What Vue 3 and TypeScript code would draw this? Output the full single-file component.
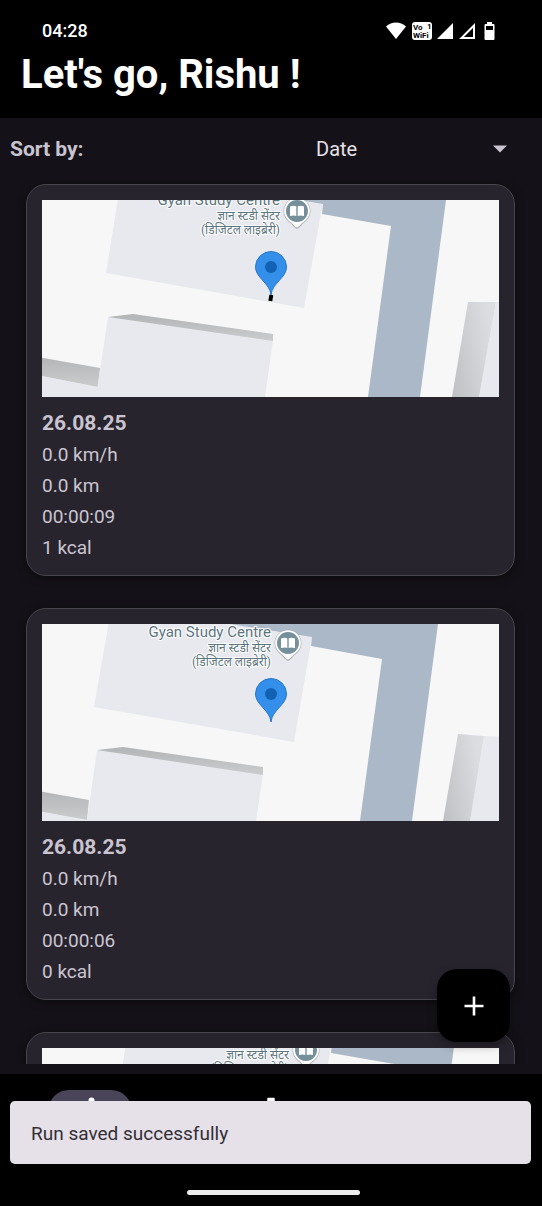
<script setup lang="ts">
import { ref } from 'vue'

interface Scene {
  shift: string
  building: string
  water: string
  lowerShadow: string
  lowerBuilding: string
  leftShadow: string
  leftBuilding: string
  rightShadow: string
  rightBuilding: string
  place: { x: number; y: number }
  labelX: number
  labelY: [number, number, number]
  pin: { x: number; y: number } | null
  trail: boolean
}

interface Run {
  id: number
  date: string
  speed: string
  distance: string
  duration: string
  calories: string
  scene: Scene
}

const sceneA: Scene = {
  shift: 'translate(0 0)',
  building: '79,-20 64,73 262,108 285,-20',
  water: '140,-20 281,4 280,14 349,26 326,197 378,197 404,0 407,-20',
  lowerShadow: '66,117 91,114 231,134 231,141',
  lowerBuilding: '66,117 72,117 231,140 223,197 54,197',
  leftShadow: '-10,156 58,168 56,187 -10,174',
  leftBuilding: '-10,174 56,187 230,210 -10,210',
  rightShadow: '426,102 454,102 437,197 410,197',
  rightBuilding: '454,102 480,102 480,197 437,197',
  place: { x: 255, y: 11 },
  labelX: 238,
  labelY: [5, 20, 34],
  pin: { x: 229, y: 67 },
  trail: true,
}

const sceneB: Scene = {
  shift: 'translate(0 0)',
  building: '70,-20 52,83 252,118 270,13 188,-20',
  water: '188,0 270,13 269,22 340,35 318,197 370,197 396,0',
  lowerShadow: '55,126 81,123 221,143 221,151',
  lowerBuilding: '55,126 62,126 221,150 214,197 45,197',
  leftShadow: '-10,166 47,176 45,196 -10,186',
  leftBuilding: '-10,186 45,196 45,210 -10,210',
  rightShadow: '416,110 442,112 428,197 401,197',
  rightBuilding: '442,112 480,113 480,197 428,197',
  place: { x: 246, y: 19 },
  labelX: 229,
  labelY: [13, 28, 42],
  pin: { x: 229, y: 70 },
  trail: false,
}

const sceneC: Scene = { ...sceneA, shift: 'translate(9 -9)' }

const runs: Run[] = [
  { id: 1, date: '26.08.25', speed: '0.0 km/h', distance: '0.0 km', duration: '00:00:09', calories: '1 kcal', scene: sceneA },
  { id: 2, date: '26.08.25', speed: '0.0 km/h', distance: '0.0 km', duration: '00:00:06', calories: '0 kcal', scene: sceneB },
  { id: 3, date: '26.08.25', speed: '0.0 km/h', distance: '0.0 km', duration: '00:00:05', calories: '0 kcal', scene: sceneC },
]

const sortBy = ref('Date')
const sortOptions = ['Date', 'Distance', 'Speed']
</script>

<template>
  <div class="app">
    <header class="header">
      <div class="status">
        <span class="clock">04:28</span>
        <svg class="status-icons" width="110" height="20" viewBox="0 0 110 20" aria-hidden="true">
          <path d="M0 5.6C5.5.1 14.5.1 20 5.6L10 18Z" fill="#fff" />
          <rect x="26" y="1" width="20" height="18" rx="3" fill="#fff" />
          <text x="27" y="9" class="badge">Vo</text>
          <text x="41" y="8" class="badge">1</text>
          <text x="27" y="17" class="badge">WiFi</text>
          <path d="M67 2V18H51Z" fill="#fff" />
          <path d="M88 4.500V17H75.500Z" fill="none" stroke="#fff" stroke-width="2" />
          <path d="M101 1h5v2h1.500q1 0 1 1V18q0 1-1 1h-8q-1 0-1-1V4q0-1 1-1H101Z" fill="#fff" />
          <rect x="100" y="5" width="7" height="4" fill="#000" />
        </svg>
      </div>
      <h1>Let's go, Rishu !</h1>
    </header>

    <main class="content">
      <div class="sort">
        <label for="sort">Sort by:</label>
        <div class="picker">
          <select id="sort" v-model="sortBy">
            <option v-for="o in sortOptions" :key="o">{{ o }}</option>
          </select>
          <svg class="caret" width="14" height="8" viewBox="0 0 14 8" aria-hidden="true">
            <path d="M0 .5H14L7 7.500Z" fill="#cac4d0" />
          </svg>
        </div>
      </div>

      <div class="list">
        <article v-for="run in runs" :key="run.id" class="card">
          <svg class="map" viewBox="0 0 457 197" preserveAspectRatio="xMidYMid slice">
            <defs>
              <linearGradient :id="`down${run.id}`" x1="0" y1="0" x2="0" y2="1">
                <stop offset="0" stop-color="#b3b4b6" />
                <stop offset="1" stop-color="#cbccce" />
              </linearGradient>
              <linearGradient :id="`side${run.id}`" x1="0" y1="1" x2="1" y2="0.6">
                <stop offset="0" stop-color="#bfc0c3" />
                <stop offset="1" stop-color="#dcdde1" />
              </linearGradient>
            </defs>
            <rect width="457" height="197" fill="#f7f7f7" />
            <g :transform="run.scene.shift">
              <polygon :points="run.scene.building" fill="#e8e9ee" />
              <polygon :points="run.scene.water" fill="#abb8c7" />
              <polygon :points="run.scene.leftBuilding" fill="#e8e9ee" />
              <polygon :points="run.scene.leftShadow" :fill="`url(#down${run.id})`" />
              <polygon :points="run.scene.lowerBuilding" fill="#e8e9ee" />
              <polygon :points="run.scene.lowerShadow" :fill="`url(#down${run.id})`" />
              <polygon :points="run.scene.rightBuilding" fill="#e8e9ee" />
              <polygon :points="run.scene.rightShadow" :fill="`url(#side${run.id})`" />
              <g class="place">
                <text :x="run.scene.labelX" :y="run.scene.labelY[0]" class="name">Gyan Study Centre</text>
                <text :x="run.scene.labelX" :y="run.scene.labelY[1]" class="local">ज्ञान स्टडी सेंटर</text>
                <text :x="run.scene.labelX" :y="run.scene.labelY[2]" class="local">(डिजिटल लाइब्रेरी)</text>
              </g>
              <g :transform="`translate(${run.scene.place.x} ${run.scene.place.y})`">
                <path d="M0 18C-3 17-5 13-8 11A13.500 13.500 0 1 1 8 11C5 13 3 17 0 18Z" fill="#8b9499" opacity=".6" />
                <path d="M0 16.500C-2.500 16-4.500 12-7.500 10.300A12.800 12.800 0 1 1 7.500 10.300C4.500 12 2.500 16 0 16.500Z" fill="#fff" />
                <circle r="11" fill="#75909a" />
                <path d="M-7-4.500Q-3-6-.7-4.500V5Q-3 3.800-7 5ZM7-4.500Q3-6 .7-4.500V5Q3 3.800 7 5Z" fill="#fff" />
              </g>
              <g v-if="run.scene.pin" :transform="`translate(${run.scene.pin.x} ${run.scene.pin.y})`">
                <path d="M0 28C-1 16-15.500 11-15.500 0A15.500 15.500 0 0 1 15.500 0C15.500 11 1 16 0 28Z" fill="#338fe9" stroke="#2677cb" stroke-width="1" />
                <circle r="6" fill="#1261b3" />
                <path v-if="run.scene.trail" d="M.3 28L-.7 34" stroke="#000" stroke-width="4" />
              </g>
            </g>
          </svg>
          <h2>{{ run.date }}</h2>
          <p>{{ run.speed }}</p>
          <p>{{ run.distance }}</p>
          <p>{{ run.duration }}</p>
          <p>{{ run.calories }}</p>
        </article>
      </div>

      <button class="fab" type="button" aria-label="Add run">
        <svg width="20" height="20" viewBox="0 0 20 20" aria-hidden="true">
          <path d="M10 .5V19.500M.5 10H19.500" stroke="#fff" stroke-width="2.600" />
        </svg>
      </button>
    </main>

    <nav class="nav">
      <button class="tab" type="button" aria-label="Runs">
        <span class="pill active">
          <svg width="36" height="36" viewBox="0 0 24 24" aria-hidden="true">
            <path d="M14 5.500a2 2 0 1 0-2-2 2 2 0 0 0 2 2ZM9.900 19.400l1-4.400 2.100 2v6h2v-7.500l-2.100-2 .6-3A7.300 7.300 0 0 0 19 13v-2a5 5 0 0 1-4.300-2.400l-1-1.600a2 2 0 0 0-2.500-.8L6 8.300V13h2V9.600l1.800-.7L8.200 17l-4.900-1-.4 2Z" fill="#fff" transform="translate(-1 1.500)" />
          </svg>
        </span>
      </button>
      <button class="tab" type="button" aria-label="Settings">
        <span class="pill">
          <svg width="30" height="30" viewBox="0 0 24 24" aria-hidden="true">
            <path d="M9 2q0-.6.600-.6h4.800q.6 0 .6.600V5H9ZM10 6h4v14h-4ZM4 11h4v9H4ZM16 13h4v7h-4Z" fill="#fff" />
          </svg>
        </span>
      </button>
      <button class="tab" type="button" aria-label="Statistics">
        <span class="pill">
          <svg width="24" height="24" viewBox="0 0 24 24" aria-hidden="true">
            <path d="M4 12h3v8H4ZM10 10h3v10h-3ZM16 14h3v6h-3Z" fill="#fff" />
          </svg>
        </span>
      </button>
    </nav>

    <div class="snackbar" role="status">Run saved successfully</div>
    <div class="home-bar"></div>
  </div>
</template>

<style>
body {
  margin: 0;
  background: #000;
}
</style>

<style scoped>
.app {
  position: relative;
  display: flex;
  flex-direction: column;
  height: 100vh;
  overflow: hidden;
  background: #000;
  color: #cac4d0;
  font-family: Roboto, "Noto Sans", "Noto Sans Devanagari", sans-serif;
}

.header {
  flex: none;
  box-sizing: border-box;
  height: 118px;
  padding-top: 20px;
  color: #fff;
}

.status {
  display: flex;
  align-items: center;
  justify-content: space-between;
  height: 22px;
  padding: 0 46px 0 42px;
}

.clock {
  font-size: 18px;
  font-weight: 500;
  line-height: 22px;
}

.badge {
  font-size: 8px;
  font-weight: 700;
  fill: #000;
}

h1 {
  margin: 9px 21px 0;
  font-size: 40px;
  font-weight: 700;
  line-height: 48px;
}

.content {
  position: relative;
  display: flex;
  flex: 1;
  flex-direction: column;
  min-height: 0;
  padding-bottom: 10px;
  background: #141218;
}

.sort {
  display: flex;
  flex: none;
  align-items: center;
  height: 62px;
  padding: 0 10px;
  font-size: 20px;
}

.sort label {
  flex: 1;
  font-size: 21px;
  font-weight: 700;
}

.picker {
  position: relative;
  flex: none;
  width: 216px;
}

.picker select {
  width: 100%;
  height: 40px;
  padding: 0;
  border: 0;
  appearance: none;
  background: transparent;
  color: #e6e0e9;
  font: inherit;
}

.caret {
  position: absolute;
  top: 16px;
  right: 25px;
  pointer-events: none;
}

.list {
  display: flex;
  flex: 1;
  flex-direction: column;
  gap: 32px;
  min-height: 0;
  padding: 4px 27px 0 26px;
  overflow: hidden;
}

.card {
  flex: none;
  padding: 15px 15px 12px;
  border: 1px solid #49454f;
  border-radius: 20px;
  background: #28242e;
  box-shadow: 0 2px 8px rgba(0, 0, 0, 0.5);
}

.map {
  display: block;
  width: 100%;
  height: 197px;
  margin-bottom: 11px;
}

.place text {
  fill: #5c747c;
  stroke: #fff;
  stroke-width: 2px;
  stroke-linejoin: round;
  paint-order: stroke;
  text-anchor: end;
}

.name {
  font-size: 15px;
}

.local {
  font-size: 12px;
}

.card h2,
.card p {
  margin: 0;
  line-height: 31px;
}

.card h2 {
  font-size: 21px;
  font-weight: 700;
}

.card p {
  font-size: 19px;
}

.fab {
  position: absolute;
  right: 32px;
  bottom: 32px;
  display: grid;
  place-items: center;
  width: 73px;
  height: 73px;
  padding: 0;
  border: 0;
  border-radius: 20px;
  background: #000;
  box-shadow: 0 4px 10px rgba(0, 0, 0, 0.35);
}

.nav {
  display: flex;
  flex: none;
  box-sizing: border-box;
  height: 132px;
  padding-top: 16px;
}

.tab {
  display: flex;
  flex: 1;
  align-items: flex-start;
  justify-content: center;
  padding: 0;
  border: 0;
  background: transparent;
}

.pill {
  display: grid;
  place-items: center;
  width: 84px;
  height: 42px;
  border-radius: 21px;
}

.active {
  background: #4a4458;
}

.snackbar {
  position: absolute;
  right: 11px;
  bottom: 42px;
  left: 10px;
  box-sizing: border-box;
  padding: 17px 21px 15px;
  border-radius: 5px;
  background: #e6e0e9;
  color: #322f35;
  font-size: 19px;
  line-height: 31px;
}

.home-bar {
  position: absolute;
  bottom: 11px;
  left: 50%;
  width: 173px;
  height: 5px;
  margin-left: -84px;
  border-radius: 3px;
  background: #ececec;
}
</style>
